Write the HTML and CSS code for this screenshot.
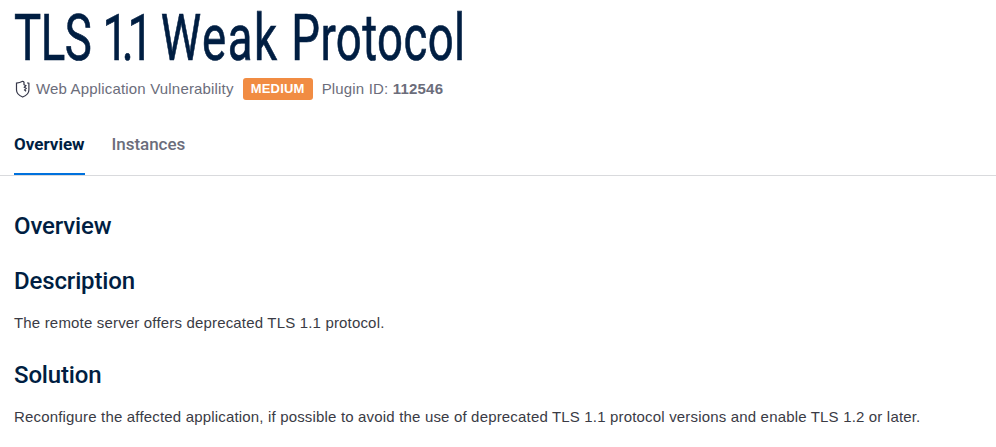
FILE: index.html
```html
<!DOCTYPE html>
<html lang="en">
<head>
<meta charset="utf-8">
<title>TLS 1.1 Weak Protocol</title>
<link rel="stylesheet" href="styles.css">
</head>
<body>
<header class="header">
  <h1 class="title"><span class="title-text"><span class="word-tls">TLS</span> <span class="word-version">1.1</span> <span class="word-weak">Weak</span> <span class="word-protocol">Protocol</span></span></h1>
  <div class="meta">
    <svg class="shield" width="16" height="18" viewBox="0 0 16 18" fill="none" stroke="#36384a" stroke-width="1.2">
      <path d="M10 1.900 8.600 1.300C6.500 2.400 4.500 2.900 2.500 3.100V10c0 3.200 2.200 5.400 6.200 7 4-1.600 6.200-3.800 6.200-7V3.200l-1.700-.3"/>
      <path d="M10 1.700v3l1.900 1-1.600 1.500 1.900 1.200-1.600 1.500 1.500 1.300"/>
    </svg>
    <span class="kind">Web Application Vulnerability</span>
    <span class="badge">MEDIUM</span>
    <span class="plugin">Plugin ID: <strong>112546</strong></span>
  </div>
</header>
<nav class="tabs">
  <a class="tab active">Overview</a>
  <a class="tab">Instances</a>
</nav>
<main class="content">
  <h2 class="heading">Overview</h2>
  <h2 class="heading">Description</h2>
  <p class="text">The remote server offers deprecated TLS 1.1 protocol.</p>
  <h2 class="heading">Solution</h2>
  <p class="text">Reconfigure the affected application, if possible to avoid the use of deprecated TLS 1.1 protocol versions and enable TLS 1.2 or later.</p>
</main>
</body>
</html>
```
FILE: styles.css
```css
* { box-sizing: border-box; }
body {
  margin: 0;
  background: #fff;
  color: #3a3b45;
  font: 15px/20px "Liberation Sans", Arial, sans-serif;
  letter-spacing: .173px;
  overflow: hidden;
}
h1, h2, p { margin: 0; }
.header { padding: 0 14px; }
.title {
  height: 78px;
  color: #001e42;
  font: 400 65px/76px Roboto, sans-serif;
  letter-spacing: 0;
  white-space: nowrap;
}
.title-text {
  display: inline-block;
  transform: scaleX(.7);
  transform-origin: 0 0;
  -webkit-text-stroke: .7px #001e42;
}
.word-tls { letter-spacing: -.7px; }
.word-version { margin-right: 4px; letter-spacing: -9px; }
.word-weak { margin-right: 2px; letter-spacing: 2.2px; }
.word-protocol { letter-spacing: .6px; }
.meta {
  display: flex;
  align-items: center;
  height: 22px;
  color: #6b6d7b;
}
.shield { margin-right: 6px; }
.plugin strong { letter-spacing: .2px; }
.badge {
  width: 70px;
  height: 22px;
  margin: 0 9px;
  border-radius: 3px;
  background: #f18c43;
  color: #fff;
  font-size: 13px;
  font-weight: 700;
  line-height: 21px;
  text-align: center;
}
.tabs {
  display: flex;
  gap: 27px;
  height: 76px;
  padding: 32px 14px 0;
  border-bottom: 1px solid #d9dadd;
}
.tab {
  height: 43px;
  color: #6b6d7b;
  font: 500 17px/24px Roboto, sans-serif;
  letter-spacing: -.05px;
}
.tab.active {
  border-bottom: 2px solid #0071dd;
  color: #001e42;
  font-weight: 700;
  letter-spacing: 0;
}
.content { padding: 35px 14px 0; }
.heading {
  margin-bottom: 25px;
  color: #001e42;
  font: 500 24px/30px Roboto, sans-serif;
  letter-spacing: -.15px;
}
.text { margin: -8px 0 27px; }
```
